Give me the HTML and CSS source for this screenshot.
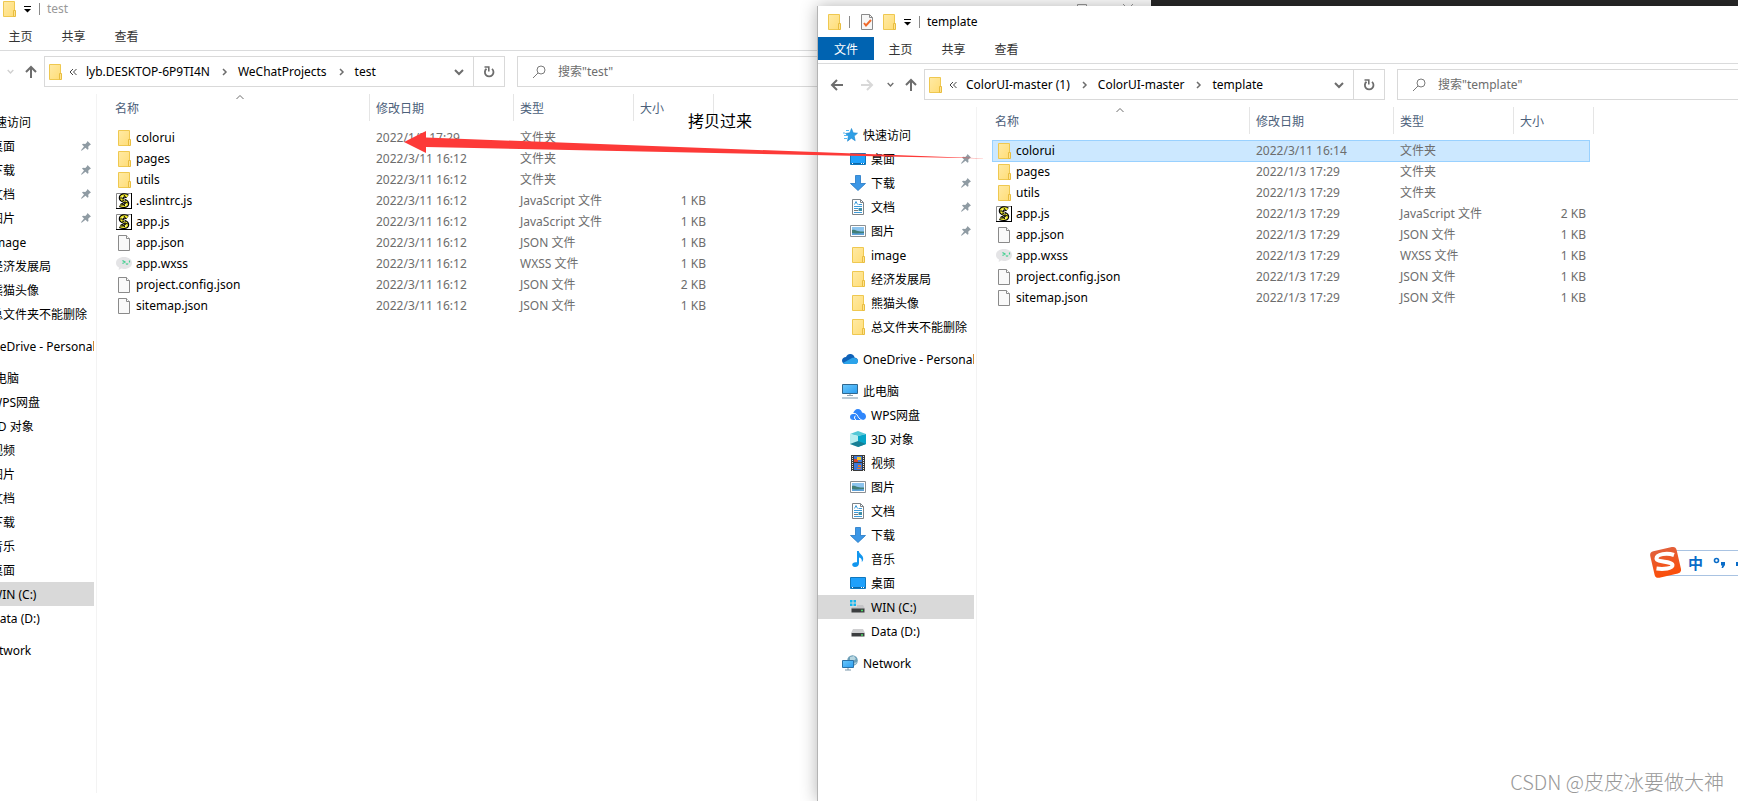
FILE: index.html
```
<!DOCTYPE html>
<html lang="zh-CN">
<head>
  <meta charset="UTF-8">
  <title>template</title>
  <link rel="stylesheet" href="styles.css">
</head>
<body>
  <!-- icons -->
  <svg class="sprite" aria-hidden="true">
    <defs>
      <linearGradient id="gFolder" x1="0" y1="0" x2="1" y2="1">
        <stop offset="0" stop-color="#ffeaa5"/><stop offset="1" stop-color="#ffdd77"/>
      </linearGradient>
      <linearGradient id="gScreen" x1="0" y1="0" x2="1" y2="1">
        <stop offset="0" stop-color="#6cc8fb"/><stop offset="1" stop-color="#2a9df0"/>
      </linearGradient>
      <linearGradient id="gSogou" x1="0" y1="0" x2="0" y2="1">
        <stop offset="0" stop-color="#e2603a"/><stop offset="1" stop-color="#fb4e0a"/>
      </linearGradient>
    </defs>
    <symbol id="i-folder" viewBox="0 0 16 16">
      <path d="M2.5.5h11v15h-11z" fill="url(#gFolder)" stroke="#efc850"/>
      <path d="M12.5 9.5h2v6h-2z" fill="#ffe391" stroke="#e8bd3f"/>
    </symbol>
    <symbol id="i-file" viewBox="0 0 16 16">
      <path d="M2.5.5h8l3 3v12h-11z" fill="#f9f9f9" stroke="#8a8a8a"/>
      <path d="M10.5.5v3h3" fill="#fff" stroke="#8a8a8a"/>
    </symbol>
    <symbol id="i-js" viewBox="0 0 16 16">
      <path d="M.5.5h15v15H.5z" fill="#fff" stroke="#888"/>
      <path d="M0 15.5h16M15.500 0v16" stroke="#000"/>
      <path d="M11.5 3.5C9 1.500 5 2.500 5 5c0 3 6 2.500 6 5.500 0 2.500-4 3-7 1.500" fill="none" stroke="#000" stroke-width="4.500"/>
      <path d="M11.5 3.5C9 1.500 5 2.500 5 5c0 3 6 2.500 6 5.500 0 2.500-4 3-7 1.500" fill="none" stroke="#f5ee2e" stroke-width="2.200"/>
      <path d="M4 5h4M6 7l4 1M8 9l4 1M4 12h4M8 2l2 3M6 10l3 3" stroke="#111"/>
      <path d="M6 4h1M8 7h1M9 12h1" stroke="#fff"/>
    </symbol>
    <symbol id="i-wxss" viewBox="0 0 16 16">
      <path d="M8 1c4.600 0 8 2.500 8 6s-3.400 6-8 6c-1 0-2-.1-2.800-.4L2.600 14l.4-2.400C1.200 10.500 0 9 0 7c0-3.500 3.400-6 8-6z" fill="#e4e4e6"/>
      <path d="M6.5 4.500L9 6 6.500 7.500M13.500 4.500v2M10 7.500c.5 1 1.500 1 2 0" fill="none" stroke="#3fcf8e" stroke-width="1.200"/>
    </symbol>
    <symbol id="i-check" viewBox="0 0 16 16">
      <path d="M2.5.5h8l3 3v12h-11z" fill="#f7f7f7" stroke="#8a8a8a"/>
      <path d="M10.5.5v3h3" fill="none" stroke="#8a8a8a"/>
      <path d="M5 9l2 2.500L12 6" fill="none" stroke="#f06a2a" stroke-width="2"/>
    </symbol>
    <symbol id="i-star" viewBox="0 0 16 16">
      <path d="M9.5 1.500l1.700 4.300 4.300.4-3.300 2.900 1 4.600-3.900-2.500-3.800 3 .8-4.900L3.500 6.500l4.400-.7z" fill="#2e9fe6" stroke="#1c86cf" stroke-width=".6"/>
      <path d="M4 3.500h3M2 8.500h3.500M2 11.500h3M1 6h2" stroke="#54b8f2"/>
    </symbol>
    <symbol id="i-desktop" viewBox="0 0 16 16">
      <path d="M.5 2.500h15v11H.5z" fill="#1ea0fb" stroke="#0f77bd"/>
      <path d="M1 12.500h14" stroke="#0b67a8"/>
      <path d="M2 12.500h1M11 12.500h1M13 12.500h1" stroke="#fff"/>
    </symbol>
    <symbol id="i-down" viewBox="0 0 16 16">
      <path d="M5.5.5h5v8h5L8 15.500.5 8.500h5z" fill="#3c97e6" stroke="#2377c4" stroke-width=".8"/>
    </symbol>
    <symbol id="i-doc" viewBox="0 0 16 16">
      <path d="M2.5.5h8l3 3v12h-11z" fill="#fff" stroke="#7d8388"/>
      <path d="M10.5.5v3h3" fill="none" stroke="#7d8388"/>
      <path d="M4.500 5.500L6 2.500l1.500 3M8.500 5.500H12M4 7.500h8M4 9.500h4M4 13.500h8" fill="none" stroke="#3c9bd9"/>
      <path d="M4 11.500h4" stroke="#777"/>
      <path d="M8.500 9h3.500v3H8.500z" fill="#3f8fa8"/>
    </symbol>
    <symbol id="i-pic" viewBox="0 0 16 16">
      <path d="M.5 2.500h15v11H.5z" fill="#fff" stroke="#8b9094"/>
      <path d="M2 4h12v8H2z" fill="#8cc4ee"/>
      <path d="M2 7c3-1 5 2 12 1.500V12H2z" fill="#417f78"/>
      <path d="M2 10c4 1 8 0 12 0v2H2z" fill="#5fa3da"/>
    </symbol>
    <symbol id="i-onedrive" viewBox="0 0 16 16">
      <path d="M4 6C5 3.500 7 2.500 9 3c2 .3 3.300 1.700 3.500 3.500C15 6.700 16 8.500 16 10s-1.500 3-3 3H3.500C1.500 13 0 11.500 0 9.500S2 6 4 6z" fill="#0f62b8"/>
      <path d="M1 12l9-5c2-1 6 .5 6 3s-1.500 3-3 3H3.500C2.500 13 1.500 12.700 1 12z" fill="#2ba3ea"/>
    </symbol>
    <symbol id="i-pc" viewBox="0 0 16 16">
      <path d="M.5 1.500h15v9H.5z" fill="url(#gScreen)" stroke="#30688f"/>
      <path d="M5 12.500h6M8 11v1" stroke="#8ca0ad"/>
      <path d="M0 15h16" stroke="#7b98ab"/>
    </symbol>
    <symbol id="i-wps" viewBox="0 0 16 16">
      <path d="M3 7c.5-3 2.500-5 5-5 2 0 3.500 1.500 4 3.500 2.500.3 4 2 4 4S14.500 13 12.500 13H3.500C1.500 13 0 12 0 10s1.300-3 3-3z" fill="#2f86fb"/>
      <path d="M3 6.500c3-.5 4 1 5 3S11 13 12.500 13" fill="none" stroke="#fff"/>
      <path d="M5.500 9c-1.500 0-1.500 3 .5 4" fill="none" stroke="#fff"/>
    </symbol>
    <symbol id="i-3d" viewBox="0 0 16 16">
      <path d="M0 3l8-3 8 3-8 2z" fill="#55c8d6"/>
      <path d="M0 3l8 2v11l-8-3z" fill="#b8eef0"/>
      <path d="M16 3L8 5v11l8-3z" fill="#06a5c8"/>
      <path d="M8 10l8 3-8 3-8-3z" fill="#167f95"/>
    </symbol>
    <symbol id="i-video" viewBox="0 0 16 16">
      <path d="M1 0h14v16H1z" fill="#3a3a3a"/>
      <path d="M2.500 1v15M13.500 1v15" stroke="#e8e8e8" stroke-dasharray="1 1"/>
      <path d="M4 1h8v6H4zM4 8h8v7H4z" fill="#3e78d8"/>
      <path d="M4 4h4v3H4z" fill="#d8452f"/>
      <path d="M7 2h4v3H7z" fill="#f0c52e"/>
      <path d="M8 10h3v2H8zM7 13h4v1H7z" fill="#e0762e"/>
    </symbol>
    <symbol id="i-music" viewBox="0 0 16 16">
      <path d="M7 0h1.800c.2 3 4.700 4 4.400 8-.1 1.500-.8 2.500-1.400 3 .4-2.500-.6-4-2.800-4.500V12c0 2.500-1.500 4-4 4-1.800 0-2.800-1-2.800-2.200C2.200 12 4 10.800 7 11.300z" fill="#1296ee"/>
    </symbol>
    <symbol id="i-win" viewBox="0 0 16 16">
      <path d="M0 1h2.500v2.500H0zM3.500 1H6v2.500H3.500zM0 4.500h2.500V7H0zM3.500 4.500H6V7H3.500z" fill="#12b5ee"/>
      <path d="M7 6h6l2 4H1l1-2h5z" fill="#c4c4c6"/>
      <path d="M1.500 9.500h13v4h-13z" fill="#3c3e40"/>
      <path d="M11 11.500h2" stroke="#4cd964" stroke-width="1.500"/>
    </symbol>
    <symbol id="i-drive" viewBox="0 0 16 16">
      <path d="M3 6h10l2 4H1z" fill="#cfcfd1"/>
      <path d="M1.500 10h13v3.500h-13z" fill="#3c3e40"/>
      <path d="M11 12h2" stroke="#4cd964" stroke-width="1.500"/>
    </symbol>
    <symbol id="i-network" viewBox="0 0 16 16">
      <circle cx="10.500" cy="5.500" r="5.300" fill="#6c9fb8"/>
      <path d="M8 2l4-1 2 3-3 2-3-1zM12 8l3-1-2 3z" fill="#b7d6e0"/>
      <path d="M.5 5.500h11v7H.5z" fill="url(#gScreen)" stroke="#2a72a8"/>
      <path d="M3 15h6M6 13v2" stroke="#7b98ab"/>
    </symbol>
    <symbol id="i-pin" viewBox="0 0 10 10">
      <path d="M6.500 0L10 3.500l-1 .5-1.800 1.800.3 2.200-1 .8-2-2L.6 9.700 0 9.300l3-3.800-2-2L2 2.700l2.300.2L6 1.200z" fill="#8f9ba3"/>
    </symbol>
    <symbol id="i-back" viewBox="0 0 14 14">
      <path d="M13 7H2M7 2L2 7l5 5" fill="none" stroke="currentColor" stroke-width="2"/>
    </symbol>
    <symbol id="i-up" viewBox="0 0 14 14">
      <path d="M7 13V2M2 7l5-5 5 5" fill="none" stroke="currentColor" stroke-width="2"/>
    </symbol>
    <symbol id="i-chev" viewBox="0 0 10 10">
      <path d="M1 3l4 4 4-4" fill="none" stroke="currentColor" stroke-width="2"/>
    </symbol>
    <symbol id="i-sort" viewBox="0 0 10 6">
      <path d="M1.500 5L5 1.500 8.500 5" fill="none" stroke="#6d6d6d"/>
    </symbol>
    <symbol id="i-right" viewBox="0 0 6 8">
      <path d="M1 1l3 3-3 3" fill="none" stroke="#6d6d6d" stroke-width="1.500"/>
    </symbol>
    <symbol id="i-more" viewBox="0 0 8 8">
      <path d="M4 1L1 4l3 3M7.500 1l-3 3 3 3" fill="none" stroke="#444"/>
    </symbol>
    <symbol id="i-refresh" viewBox="0 0 12 12">
      <path d="M3.500 2.800A4.300 4.300 0 1 0 9 2.900" fill="none" stroke="#6d6d6d" stroke-width="1.800"/>
      <path d="M1.500 1h4.300v4.500" fill="none" stroke="#6d6d6d" stroke-width="1.600"/>
    </symbol>
    <symbol id="i-search" viewBox="0 0 14 14">
      <circle cx="9" cy="5" r="4" fill="none" stroke="#7a7a7a"/>
      <path d="M6 8l-5 5" stroke="#7a7a7a"/>
    </symbol>
    <symbol id="i-menu" viewBox="0 0 8 8">
      <path d="M0 1.500h7" stroke="#000"/><path d="M0 4h7L3.500 7.500z" fill="#000"/>
    </symbol>
    <symbol id="i-max" viewBox="0 0 10 10">
      <path d="M.5.5h9v9h-9z" fill="none" stroke="#999"/>
    </symbol>
    <symbol id="i-close" viewBox="0 0 10 10">
      <path d="M0 0l10 10M10 0L0 10" stroke="#999"/>
    </symbol>
  </svg>

  <section class="window window-back" id="win-test"></section>
  <section class="window window-front" id="win-template"></section>

  <!-- annotation -->
  <svg class="arrow" width="584" height="22" viewBox="0 0 584 22" aria-hidden="true">
    <path d="M0 11L22 0v6.500L583 27.500 22 16v6z" fill="#fd3a38"/>
  </svg>
  <p class="note">拷贝过来</p>

  <div class="ime">
    <svg class="ime-logo" viewBox="0 0 32 32" aria-hidden="true">
      <rect x="3" y="3" width="27" height="27" rx="4" fill="url(#gSogou)" transform="rotate(-13 16 16)"/>
      <path d="M25 9C18 6.500 7.500 8 7.500 12.500c0 4 15.500 2.500 16 6.500.3 3.500-9 4.500-16 3.500" fill="none" stroke="#fff" stroke-width="4"/>
    </svg>
    <button class="ime-lang">中</button>
    <svg class="ime-punct" viewBox="0 0 28 14" aria-hidden="true">
      <circle cx="3.500" cy="4.500" r="2" fill="none" stroke="#0a6cc8" stroke-width="1.600"/>
      <path d="M8 6h4v3l-2 3H8.500l.8-2.500H8zM23 6h4v4h-4z" fill="#0a6cc8"/>
    </svg>
  </div>
  <p class="watermark">CSDN @皮皮冰要做大神</p>

  <script>
    const icon = (name, cls = "icon") => `<svg class="${cls}" aria-hidden="true"><use href="#i-${name}"/></svg>`;

    // [icon, text, level, pinned]
    const groups = [
      [
        ["star", "快速访问", 1],
        ["desktop", "桌面", 2, true],
        ["down", "下载", 2, true],
        ["doc", "文档", 2, true],
        ["pic", "图片", 2, true],
        ["folder", "image", 2],
        ["folder", "经济发展局", 2],
        ["folder", "熊猫头像", 2],
        ["folder", "总文件夹不能删除", 2]
      ],
      [["onedrive", "OneDrive - Personal", 1]],
      [
        ["pc", "此电脑", 1],
        ["wps", "WPS网盘", 2],
        ["3d", "3D 对象", 2],
        ["video", "视频", 2],
        ["pic", "图片", 2],
        ["doc", "文档", 2],
        ["down", "下载", 2],
        ["music", "音乐", 2],
        ["desktop", "桌面", 2],
        ["win", "WIN (C:)", 2],
        ["drive", "Data (D:)", 2]
      ],
      [["network", "Network", 1]]
    ];

    const windows = [
      {
        id: "win-test",
        title: "test",
        path: ["lyb.DESKTOP-6P9TI4N", "WeChatProjects", "test"],
        files: [
          ["folder", "colorui", "2022/1/3 17:29", "文件夹", ""],
          ["folder", "pages", "2022/3/11 16:12", "文件夹", ""],
          ["folder", "utils", "2022/3/11 16:12", "文件夹", ""],
          ["js", ".eslintrc.js", "2022/3/11 16:12", "JavaScript 文件", "1 KB"],
          ["js", "app.js", "2022/3/11 16:12", "JavaScript 文件", "1 KB"],
          ["file", "app.json", "2022/3/11 16:12", "JSON 文件", "1 KB"],
          ["wxss", "app.wxss", "2022/3/11 16:12", "WXSS 文件", "1 KB"],
          ["file", "project.config.json", "2022/3/11 16:12", "JSON 文件", "2 KB"],
          ["file", "sitemap.json", "2022/3/11 16:12", "JSON 文件", "1 KB"]
        ]
      },
      {
        id: "win-template",
        title: "template",
        path: ["ColorUI-master (1)", "ColorUI-master", "template"],
        selected: "colorui",
        files: [
          ["folder", "colorui", "2022/3/11 16:14", "文件夹", ""],
          ["folder", "pages", "2022/1/3 17:29", "文件夹", ""],
          ["folder", "utils", "2022/1/3 17:29", "文件夹", ""],
          ["js", "app.js", "2022/1/3 17:29", "JavaScript 文件", "2 KB"],
          ["file", "app.json", "2022/1/3 17:29", "JSON 文件", "1 KB"],
          ["wxss", "app.wxss", "2022/1/3 17:29", "WXSS 文件", "1 KB"],
          ["file", "project.config.json", "2022/1/3 17:29", "JSON 文件", "1 KB"],
          ["file", "sitemap.json", "2022/1/3 17:29", "JSON 文件", "1 KB"]
        ]
      }
    ];

    function navItem([name, text, level, pinned]) {
      const current = text === "WIN (C:)" ? " current" : "";
      return `<a href="#" class="nav-item level-${level}${current}">${icon(name)}<span>${text}</span>${pinned ? icon("pin", "pin") : ""}</a>`;
    }

    function render(win) {
      const crumbs = win.path.map(p => `<a href="#">${p}</a>`).join(icon("right", "crumb-sep"));
      const nav = groups.map(g => `<div class="nav-group">${g.map(navItem).join("")}</div>`).join("");
      const rows = win.files.map(([ic, name, date, type, size]) => `
        <tr class="${name === win.selected ? "selected" : ""}">
          <td><div class="file">${icon(ic)}<span>${name}</span></div></td>
          <td>${date}</td><td>${type}</td><td class="size">${size}</td>
        </tr>`).join("");

      document.getElementById(win.id).innerHTML = `
        <header class="titlebar">
          ${icon("folder")}<i class="bar"></i>${icon("check")}${icon("folder")}
          ${icon("menu", "menu")}<i class="bar"></i>
          <h1>${win.title}</h1>
          <div class="caption">${icon("max", "cap")}${icon("close", "cap")}</div>
        </header>
        <div class="tabs">
          <button class="tab-file">文件</button>
          <button>主页</button><button>共享</button><button>查看</button>
        </div>
        <div class="toolbar">
          <button class="nav-back" aria-label="返回">${icon("back", "nav-arrow")}</button>
          <button class="nav-forward" aria-label="前进">${icon("back", "nav-arrow")}</button>
          <button class="nav-recent" aria-label="最近">${icon("chev", "chev-small")}</button>
          <button class="nav-up" aria-label="向上">${icon("up", "nav-arrow")}</button>
          <div class="address">
            ${icon("folder")}${icon("more", "more")}
            <div class="crumbs">${crumbs}</div>
            <button class="history" aria-label="历史">${icon("chev", "chev")}</button>
            <button class="refresh" aria-label="刷新">${icon("refresh", "refresh-icon")}</button>
          </div>
          <label class="search">
            ${icon("search", "search-icon")}
            <input type="text" aria-label="搜索" placeholder='搜索"${win.title}"'>
          </label>
        </div>
        <div class="content">
          <nav class="sidebar">${nav}</nav>
          <main>
            <table>
              <thead><tr><th class="c-name">${icon("sort", "sort")}名称</th><th class="c-date">修改日期</th><th class="c-type">类型</th><th class="c-size">大小</th></tr></thead>
              <tbody>${rows}</tbody>
            </table>
          </main>
        </div>`;
    }

    windows.forEach(render);
  </script>
</body>
</html>
```
FILE: styles.css
```
* {
  box-sizing: border-box;
}

body {
  margin: 0;
  height: 100vh;
  overflow: hidden;
  position: relative;
  background: #282828;
  font-family: "Noto Sans", "Noto Sans CJK SC", sans-serif;
  font-size: 12px;
  color: #000;
}

button,
input {
  font: inherit;
  color: inherit;
  border: none;
  background: none;
  padding: 0;
}

a {
  color: inherit;
  text-decoration: none;
}

.sprite {
  position: absolute;
  width: 0;
  height: 0;
}

.icon {
  width: 16px;
  height: 16px;
  flex: none;
}

/* windows */
.window {
  position: absolute;
  display: flex;
  flex-direction: column;
  background: #fff;
  border-left: 1px solid #b4b4b4;
  overflow: hidden;
}

.window-back {
  left: -63px;
  right: 587px;
  top: -7px;
  bottom: 0;
  padding-bottom: 8px;
}

.window-front {
  left: 817px;
  right: 0;
  top: 6px;
  bottom: 0;
  box-shadow: 0 0 16px rgba(0, 0, 0, 0.3);
}

/* title bar */
.titlebar {
  display: flex;
  align-items: center;
  height: 31px;
  padding-left: 8px;
  flex: none;
}

.titlebar h1 {
  margin: 0 0 0 7px;
  font-size: 12px;
  font-weight: normal;
  flex: 1;
}

.titlebar .bar {
  width: 1px;
  height: 12px;
  margin: 0 9px 0 7px;
  background: #8a8a8a;
}

.titlebar .icon + .icon {
  margin-left: 6px;
}

.titlebar .menu {
  width: 8px;
  height: 8px;
  margin-left: 7px;
}

.titlebar .menu + .bar {
  margin-right: 0;
}

.caption {
  display: none;
  gap: 36px;
  padding-right: 18px;
}

.cap {
  width: 10px;
  height: 10px;
}

.window-back .caption {
  display: flex;
}

.window-back h1 {
  color: #999;
}

/* ribbon tabs */
.tabs {
  display: flex;
  height: 27px;
  border-bottom: 1px solid #dadbdc;
  flex: none;
}

.tabs button {
  width: 53px;
  height: 23px;
  color: #333;
}

.tabs .tab-file {
  width: 56px;
  color: #fff;
  background: #0063b1;
}

/* address row */
.toolbar {
  display: flex;
  align-items: center;
  height: 43px;
  padding: 0 0 2px 12px;
  flex: none;
}

.toolbar button {
  display: flex;
  align-items: center;
  justify-content: center;
  height: 29px;
  color: #6d6d6d;
}

.toolbar .nav-back,
.toolbar .nav-forward {
  width: 30px;
  justify-content: flex-start;
}

.toolbar .nav-forward {
  width: 24px;
  color: #d8d8d8;
}

.nav-forward .nav-arrow {
  transform: scaleX(-1);
}

.toolbar .nav-recent {
  width: 12px;
}

.toolbar .nav-up {
  width: 22px;
  justify-content: flex-end;
  margin-right: 6px;
}

.window-back .toolbar .nav-recent {
  color: #d0d0d0;
}

.nav-arrow {
  width: 14px;
  height: 14px;
}

.chev-small {
  width: 7px;
  height: 7px;
}

.chev {
  width: 10px;
  height: 10px;
}

.address {
  display: flex;
  align-items: center;
  flex: none;
  width: 461px;
  height: 31px;
  margin-right: 12px;
  padding-left: 2px;
  border: 1px solid #d9d9d9;
}

.more {
  width: 8px;
  height: 8px;
  margin: 0 9px 0 6px;
}

.crumbs {
  display: flex;
  align-items: center;
  flex: 1;
}

.crumb-sep {
  width: 6px;
  height: 8px;
  margin: 0 10px 0 12px;
}

.toolbar .history {
  width: 28px;
}

.toolbar .refresh {
  width: 31px;
  border-left: 1px solid #d9d9d9;
}

.refresh-icon {
  width: 12px;
  height: 12px;
}

.search {
  display: flex;
  align-items: center;
  flex: 1;
  height: 31px;
  padding-left: 14px;
  border: 1px solid #d9d9d9;
  border-right: none;
}

.search-icon {
  width: 14px;
  height: 14px;
  margin-right: 12px;
}

.search input {
  flex: 1;
  min-width: 0;
  outline: none;
}

.search input::placeholder {
  color: #6d6d6d;
}

/* navigation pane */
.content {
  display: flex;
  flex: 1;
  min-height: 0;
}

.sidebar {
  flex: none;
  width: 159px;
  padding: 16px 2px 0 0;
  border-right: 1px solid #f3f3f3;
}

.nav-group {
  margin-bottom: 8px;
}

.nav-item {
  display: flex;
  align-items: center;
  height: 24px;
  gap: 5px;
  overflow: hidden;
  white-space: nowrap;
}

.nav-item.level-1 {
  padding-left: 24px;
}

.nav-item.level-2 {
  padding-left: 32px;
}

.nav-item.current {
  background: #d9d9d9;
}

.pin {
  width: 10px;
  height: 10px;
  margin-left: auto;
  margin-right: 3px;
}

/* file list */
main {
  flex: 1;
  min-width: 0;
  padding-left: 15px;
}

table {
  border-collapse: separate;
  border-spacing: 0;
  table-layout: fixed;
  width: 598px;
}

th {
  position: relative;
  height: 27px;
  padding: 0 0 0 6px;
  border-right: 1px solid #e5e5e5;
  color: #4c607a;
  font-weight: normal;
  text-align: left;
}

.c-name {
  width: 258px;
  padding-left: 3px;
}

.c-date {
  width: 144px;
}

.c-type {
  width: 120px;
}

.c-size {
  border-right: none;
  box-shadow: 3px 0 #fff, 4px 0 #e5e5e5;
}

.sort {
  position: absolute;
  top: 0;
  left: 50%;
  width: 10px;
  height: 6px;
  margin-left: -6px;
}

tbody::before {
  content: "";
  display: block;
  height: 6px;
}

td {
  height: 21px;
  padding: 0 0 0 6px;
  color: #6d6d6d;
  line-height: 21px;
  white-space: nowrap;
}

td:first-child {
  padding-left: 4px;
  color: #000;
}

td.size {
  padding-right: 4px;
  text-align: right;
}

.file {
  display: flex;
  align-items: center;
  gap: 4px;
  height: 21px;
}

tr.selected {
  background: #cce8ff;
  box-shadow: inset 1px 1px #99d1ff, inset -1px 0 #99d1ff, 0 1px #99d1ff;
}

/* overlays */
.arrow {
  position: absolute;
  left: 404px;
  top: 131px;
  overflow: visible;
}

.note {
  position: absolute;
  left: 688px;
  top: 109px;
  margin: 0;
  font-size: 16px;
  line-height: 24px;
}

.ime {
  position: absolute;
  right: 0;
  top: 550px;
  display: flex;
  align-items: center;
  width: 72px;
  height: 26px;
  padding-left: 22px;
  background: #fff;
  border: 1px solid #a9c3e2;
  border-width: 1px 0;
}

.ime-logo {
  position: absolute;
  left: -17px;
  top: -5px;
  width: 32px;
  height: 32px;
}

.ime-lang {
  color: #0a6cc8;
  font-size: 15px;
  font-weight: bold;
  line-height: 24px;
}

.ime-punct {
  width: 28px;
  height: 14px;
  margin-left: 10px;
  flex: none;
}

.watermark {
  position: absolute;
  right: 14px;
  bottom: 4px;
  margin: 0;
  font-family: "Noto Sans CJK SC", sans-serif;
  font-size: 20px;
  font-weight: 300;
  line-height: 30px;
  color: #999;
}
```
